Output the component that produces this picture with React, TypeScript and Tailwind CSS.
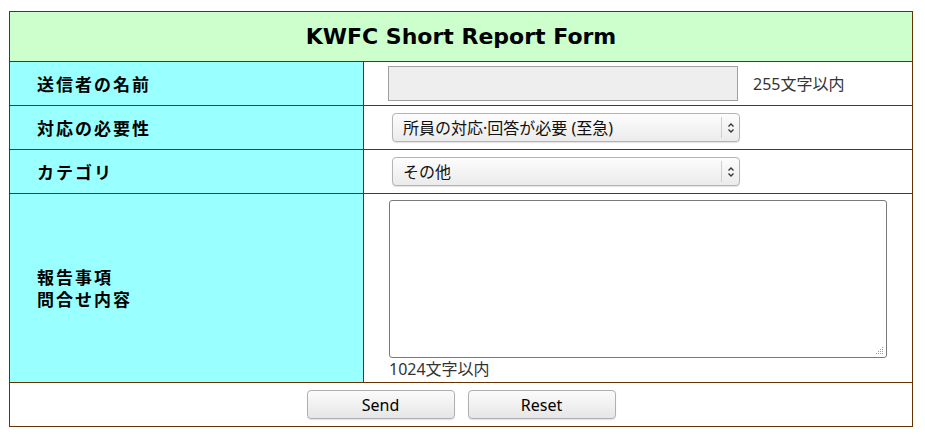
import React from "react";

function Select({ value }: { value: string }) {
  return (
    <div className="relative w-[348px] h-[29px]">
      <select
        defaultValue={value}
        className="appearance-none w-full h-full rounded-[4px] border border-[#b4b4b4] bg-gradient-to-b from-[#fdfdfd] to-[#ebebeb] pl-[10px] text-[16px] text-[#111] font-['Noto_Sans','Noto_Sans_CJK_JP',sans-serif] shadow-[0_1px_1px_rgba(0,0,0,0.12)] outline-none"
      >
        <option>{value}</option>
      </select>
      <div className="pointer-events-none absolute right-0 top-[4px] bottom-[4px] w-[19px] border-l border-[#cfcfcf] flex items-center justify-center">
        <svg width="8" height="12" viewBox="0 0 8 12" fill="none" stroke="#333" strokeWidth="1.3">
          <path d="M1.5 4.5 L4 2 L6.5 4.5" />
          <path d="M1.5 7.5 L4 10 L6.5 7.5" />
        </svg>
      </div>
    </div>
  );
}

export default function App() {
  const cell = "border border-[#663300]";
  const label =
    "bg-[#99ffff] pl-[27px] text-[17px] font-bold tracking-[2px] text-black font-['Noto_Sans_CJK_JP',sans-serif]";
  const btn =
    "w-[148px] h-[29px] rounded-[4px] border border-[#b0b0b0] bg-gradient-to-b from-[#fbfbfb] to-[#e6e6e6] text-[16px] text-black font-['Noto_Sans',sans-serif] shadow-[0_1px_1px_rgba(0,0,0,0.12)]";
  return (
    <div className="bg-white w-[925px] h-[438px] pt-[11px] pl-[9px]">
      <table className="border-collapse w-[904px] border border-[#663300]">
        <tbody>
          <tr className="h-[50px]">
            <td
              colSpan={2}
              className={`${cell} bg-[#ccffcc] text-center text-[22px] font-bold text-black font-['DejaVu_Sans',sans-serif]`}
            >
              KWFC Short Report Form
            </td>
          </tr>
          <tr className="h-[44px]">
            <td className={`${cell} ${label} w-[354px]`}>送信者の名前</td>
            <td className={`${cell} pl-[24px]`}>
              <div className="flex items-center">
                <input
                  type="text"
                  className="w-[350px] h-[35px] bg-[#eeeeee] border border-[#a0a0a0] outline-none"
                />
                <span className="ml-[15px] text-[16px] text-[#333] font-['Noto_Sans','Noto_Sans_CJK_JP',sans-serif]">
                  255文字以内
                </span>
              </div>
            </td>
          </tr>
          <tr className="h-[44px]">
            <td className={`${cell} ${label}`}>対応の必要性</td>
            <td className={`${cell} pl-[28px]`}>
              <Select value="所員の対応·回答が必要 (至急)" />
            </td>
          </tr>
          <tr className="h-[44px]">
            <td className={`${cell} ${label}`}>カテゴリ</td>
            <td className={`${cell} pl-[28px]`}>
              <Select value="その他" />
            </td>
          </tr>
          <tr className="h-[189px]">
            <td className={`${cell} ${label} leading-[22px]`}>
              報告事項
              <br />
              問合せ内容
            </td>
            <td className={`${cell} pl-[25px] align-top pt-[6px]`}>
              <div className="relative w-[498px] h-[158px]">
                <textarea className="block w-full h-full border border-[#7a7a7a] rounded-[3px] bg-white outline-none resize-none" />
                <svg className="pointer-events-none absolute right-[3px] bottom-[3px]" width="9" height="9" viewBox="0 0 9 9" fill="#9a9a9a">
                  <rect x="7" y="1" width="1" height="1" />
                  <rect x="5" y="3" width="1" height="1" />
                  <rect x="7" y="3" width="1" height="1" />
                  <rect x="3" y="5" width="1" height="1" />
                  <rect x="5" y="5" width="1" height="1" />
                  <rect x="7" y="5" width="1" height="1" />
                  <rect x="1" y="7" width="1" height="1" />
                  <rect x="3" y="7" width="1" height="1" />
                  <rect x="5" y="7" width="1" height="1" />
                  <rect x="7" y="7" width="1" height="1" />
                </svg>
              </div>
              <div className="mt-[1px] text-[16px] leading-[20px] text-[#333] font-['Noto_Sans','Noto_Sans_CJK_JP',sans-serif]">
                1024文字以内
              </div>
            </td>
          </tr>
          <tr className="h-[44px]">
            <td colSpan={2} className={`${cell}`}>
              <div className="flex justify-center gap-[13px]">
                <button className={btn}>Send</button>
                <button className={btn}>Reset</button>
              </div>
            </td>
          </tr>
        </tbody>
      </table>
    </div>
  );
}
